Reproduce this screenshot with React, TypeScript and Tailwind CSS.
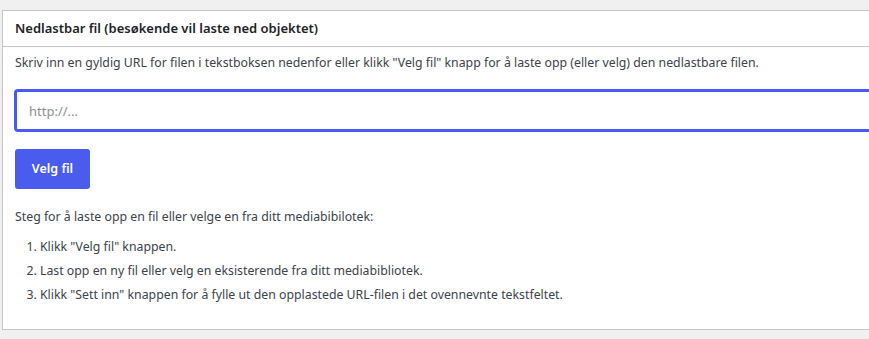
export default function App() {
  return (
    <div
      className="min-h-[339px] bg-[#f0f0f1] pl-[2px] pt-[10px] pb-[9px] text-[12.3px] text-[#3c434a]"
      style={{ fontFamily: '"Noto Sans", "Open Sans", sans-serif' }}
    >
      <div className="w-[880px] border border-r-0 border-[#c3c4c7] bg-white">
        <div className="flex h-[36px] items-center border-b border-[#c3c4c7] px-[12px]">
          <h2 className="text-[13px] font-semibold text-[#1d2327]">
            Nedlastbar fil (besøkende vil laste ned objektet)
          </h2>
        </div>
        <div className="px-[12px] pt-[5px] pb-[22px]">
          <p className="leading-[22px]">
            Skriv inn en gyldig URL for filen i tekstboksen nedenfor eller klikk "Velg fil" knapp for å laste opp (eller velg) den nedlastbare filen.
          </p>
          <input
            type="text"
            placeholder="http://..."
            className="mt-[15px] ml-[-1px] block h-[43px] w-[870px] rounded-[4px] border-[3px] border-[#4a5cf0] px-[12px] text-[13px] text-[#3c434a] outline-none placeholder:text-[#8c8f94]"
          />
          <button className="mt-[17px] h-[40px] w-[75px] rounded-[3px] bg-[#4a5ced] text-[12.5px] font-semibold text-white">
            Velg fil
          </button>
          <p className="mt-[17px] leading-[22px]">
            Steg for å laste opp en fil eller velge en fra ditt mediabibilotek:
          </p>
          <ol className="mt-[7px] list-decimal pl-[25px] leading-[24px]">
            <li>Klikk "Velg fil" knappen.</li>
            <li>Last opp en ny fil eller velg en eksisterende fra ditt mediabibliotek.</li>
            <li>Klikk "Sett inn" knappen for å fylle ut den opplastede URL-filen i det ovennevnte tekstfeltet.</li>
          </ol>
        </div>
      </div>
    </div>
  );
}
